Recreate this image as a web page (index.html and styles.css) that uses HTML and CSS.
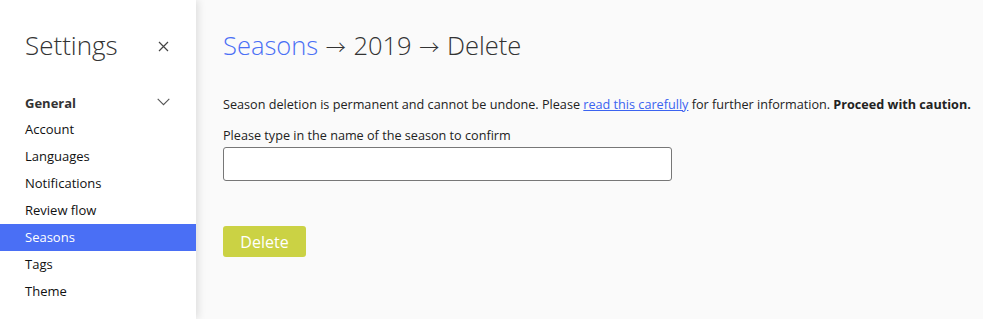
FILE: index.html
```html
<!DOCTYPE html>
<html lang="en">
<head>
<meta charset="utf-8">
<title>Settings – Seasons – Delete</title>
<link rel="stylesheet" href="styles.css">
</head>
<body>
<div class="layout">
  <aside class="sidebar">
    <div class="sidebar-head">
      <h1 class="sidebar-title">Settings</h1>
      <button class="icon-btn close" aria-label="Close">
        <svg width="11" height="11" viewBox="0 0 11 11"><path d="M1 1L10 10M10 1L1 10" stroke="#444" stroke-width="1.2" fill="none"/></svg>
      </button>
    </div>
    <nav class="nav">
      <div class="nav-group">
        <span>General</span>
        <svg class="chev" width="13" height="8" viewBox="0 0 13 8"><path d="M0.7 0.8L6.5 6.6L12.3 0.8" stroke="#555" stroke-width="1.1" fill="none"/></svg>
      </div>
      <a class="nav-item" href="#">Account</a>
      <a class="nav-item" href="#">Languages</a>
      <a class="nav-item" href="#">Notifications</a>
      <a class="nav-item" href="#">Review flow</a>
      <a class="nav-item active" href="#">Seasons</a>
      <a class="nav-item" href="#">Tags</a>
      <a class="nav-item" href="#">Theme</a>
    </nav>
  </aside>
  <main class="main">
    <h2 class="crumbs"><a class="crumb-link" href="#">Seasons</a> <span class="arrow">→</span> 2019 <span class="arrow">→</span> Delete</h2>
    <p class="warning">Season deletion is permanent and cannot be undone. Please <a href="#" class="link">read this carefully</a> for further information. <strong>Proceed with caution.</strong></p>
    <label class="field-label" for="season-name">Please type in the name of the season to confirm</label>
    <input class="field-input" id="season-name" type="text">
    <button class="btn-delete">Delete</button>
  </main>
</div>
</body>
</html>
```
FILE: styles.css
```css
* { box-sizing: border-box; }
html, body { margin: 0; height: 100%; }
body {
  font-family: "Open Sans", "Liberation Sans", sans-serif;
  color: #333;
  background: #fafafa;
}
.layout {
  display: flex;
  min-height: 100%;
}
.sidebar {
  width: 196px;
  flex: 0 0 196px;
  background: #fff;
  box-shadow: 2px 0 8px rgba(0,0,0,0.12);
  position: relative;
  z-index: 1;
}
.sidebar-head {
  display: flex;
  align-items: center;
  justify-content: space-between;
  padding: 26px 27px 0 25px;
  height: 64px;
}
.sidebar-title {
  margin: 0;
  font-size: 26px;
  font-weight: 300;
  line-height: 36px;
  color: #333;
}
.icon-btn {
  border: 0;
  background: none;
  padding: 0;
  display: flex;
  cursor: pointer;
}
.close { margin-top: 2px; }
.nav {
  display: flex;
  flex-direction: column;
  margin-top: 25px;
}
.nav-group {
  display: flex;
  align-items: center;
  justify-content: space-between;
  padding: 0 26px 0 25px;
  height: 27px;
  font-size: 13px;
  font-weight: 700;
  color: #333;
}
.chev { margin-top: -2px; }
.nav-item {
  display: block;
  height: 27px;
  line-height: 27px;
  padding-left: 25px;
  font-size: 13px;
  color: #111;
  text-decoration: none;
}
.nav-item.active {
  background: #4a6ff5;
  color: #fff;
}
.main {
  flex: 1;
  padding: 27px 0 0 27px;
}
.crumbs {
  margin: 0;
  font-size: 25.5px;
  font-weight: 300;
  line-height: 36px;
  color: #333;
  white-space: nowrap;
}
.arrow {
  font-family: "Noto Sans CJK JP", "DejaVu Sans", sans-serif;
  font-weight: 300;
  font-size: 20px;
  margin: 0 1px;
}
.crumb-link {
  color: #4a6ff5;
  text-decoration: none;
}
.warning {
  margin: 29px 0 0;
  font-size: 12.65px;
  line-height: 20px;
  color: #222;
  white-space: nowrap;
}
.link { color: #3b63f0; }
.warning strong { font-weight: 700; color: #222; }
.field-label {
  display: block;
  margin-top: 11px;
  font-size: 12.65px;
  line-height: 20px;
  color: #222;
}
.field-input {
  display: block;
  margin-top: 2px;
  width: 449px;
  height: 34px;
  border: 1px solid #777;
  border-radius: 3px;
  background: #fff;
  font: inherit;
}
.btn-delete {
  display: block;
  margin-top: 45px;
  width: 83px;
  height: 31px;
  border: 0;
  border-radius: 3px;
  background: #cbd244;
  color: #fff;
  font-family: inherit;
  font-size: 16px;
  padding: 0;
  cursor: pointer;
}
```
